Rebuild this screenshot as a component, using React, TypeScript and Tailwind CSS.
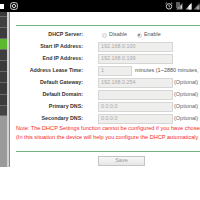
import React from "react";

const font = { fontFamily: '"Liberation Sans", Arial, sans-serif' };

function Row({ label, children }: { label: string; children?: React.ReactNode }) {
  return (
    <div className="flex h-[12px] items-center">
      <div className="w-[67px] shrink-0 text-right text-[5.3px] font-bold leading-none text-[#333]">{label}</div>
      <div className="ml-[15px] flex items-center">{children}</div>
    </div>
  );
}

function Box({ value, w = "w-[75px]" }: { value?: string; w?: string }) {
  return (
    <div className={`${w} flex h-[10px] items-center border border-[#d6d6d6] bg-[#eeeeec] pl-[2px] text-[5.4px] leading-none text-[#a8a8a8]`}>
      {value}
    </div>
  );
}

function Opt() {
  return <span className="ml-[1px] text-[5.5px] leading-none text-[#666]">(Optional)</span>;
}

export default function App() {
  const items = [
    "h-[4px] bg-[#3a3a3a]",
    "h-[10px] bg-[#404040]",
    "h-[10px] bg-[#3c3c3c]",
    "h-[10px] bg-[#5cb82c]",
    "h-[10px] bg-[#3e3e3e]",
    "h-[10px] bg-[#3a3a3a]",
    "h-[10px] bg-[#3c3c3c]",
    "h-[11px] bg-[#3a3a3a]",
    "h-[10px] bg-[#3c3c3c]",
    "h-[9px] bg-[#444]",
  ];
  return (
    <div className="relative h-[200px] w-[200px] overflow-hidden bg-white" style={font}>
      {/* status bar */}
      <div className="flex h-[12px] items-center bg-black">
        <div className="ml-0 h-[5px] w-[4px] bg-white" />
        <svg className="ml-[6px]" width="8" height="8" viewBox="0 0 8 8">
          <rect x="0.7" y="0.7" width="6.6" height="6.6" rx="1.8" fill="none" stroke="#ddd" strokeWidth="1" />
          <circle cx="4" cy="4" r="1.6" fill="none" stroke="#ddd" strokeWidth="1" />
        </svg>
        <div className="flex-1" />
        <svg width="8" height="8" viewBox="0 0 8 8" className="mr-[2px]">
          <circle cx="4" cy="4.4" r="2.7" fill="none" stroke="#ddd" strokeWidth="0.9" />
          <path d="M4 2.8 V4.5 L5 5.2" stroke="#ddd" strokeWidth="0.8" fill="none" />
          <path d="M0.6 1.8 L1.9 0.7 M7.4 1.8 L6.1 0.7" stroke="#ddd" strokeWidth="0.9" />
        </svg>
        <svg width="8" height="8" viewBox="0 0 8 8" className="mr-[2px]">
          <path d="M1 1 H5 M1 3 H5 M1 5 H4" stroke="#ccc" strokeWidth="0.9" />
          <path d="M7.5 1 V7.5 H1 Z" fill="#bbb" opacity="0.7" />
          <path d="M6.3 3.5 V6.5" stroke="#fff" strokeWidth="0.8" />
        </svg>
        <svg width="7" height="8" viewBox="0 0 7 8" className="mr-[1px]">
          <path d="M6.5 1 V7.5 H0.5 Z" fill="#aaa" />
          <path d="M6.5 1 V7.5 H3.5 V4 Z" fill="#eee" />
        </svg>
        <svg width="7" height="8" viewBox="0 0 7 8">
          <path d="M6.5 1 V7.5 H0.5 Z" fill="#666" />
          <path d="M6.5 3 V7.5 H3.5 V5 Z" fill="#999" />
        </svg>
      </div>

      <div className="flex h-[155px]">
        {/* sidebar */}
        <div className="flex w-[7px] flex-col bg-[#6a6a6a]">
          {items.map((c, i) => (
            <div key={i} className={`${c} mb-[1px] w-full`} />
          ))}
          <div className="flex-1 bg-[#9a9a9a]" />
        </div>
        <div className="w-[2px] bg-[#d2d2d2]" />
        <div className="w-[1px] bg-[#8a8a8a]" />

        {/* content */}
        <div className="flex-1 overflow-hidden whitespace-nowrap pl-[6px]">
          <div className="mt-[13px] h-[1px] w-[200px] bg-[#72b282]" />
          <div className="mt-[3px]">
            <Row label="DHCP Server:">
              <div className="ml-[4px] h-[5px] w-[5px] rounded-full border border-[#cfcfcf] bg-[#f4f4f4]" />
              <span className="ml-[2px] text-[5.4px] leading-none text-[#555]">Disable</span>
              <div className="ml-[10px] flex h-[5px] w-[5px] items-center justify-center rounded-full border border-[#cfcfcf] bg-[#f4f4f4]">
                <div className="h-[2px] w-[2px] rounded-full bg-[#777]" />
              </div>
              <span className="ml-[2px] text-[5.4px] leading-none text-[#555]">Enable</span>
            </Row>
            <Row label="Start IP Address:">
              <Box value="192.168.0.100" />
            </Row>
            <Row label="End IP Address:">
              <Box value="192.168.0.199" />
            </Row>
            <Row label="Address Lease Time:">
              <Box value="1" w="w-[34px]" />
              <span className="ml-[3px] text-[5.5px] leading-none text-[#555]">minutes (1~2880 minutes, The default value is 120)</span>
            </Row>
            <Row label="Default Gateway:">
              <Box value="192.168.0.254" />
              <Opt />
            </Row>
            <Row label="Default Domain:">
              <Box />
              <Opt />
            </Row>
            <Row label="Primary DNS:">
              <Box value="0.0.0.0" />
              <Opt />
            </Row>
            <Row label="Secondary DNS:">
              <Box value="0.0.0.0" />
              <Opt />
            </Row>
          </div>
          <div className="mt-[-1px] text-[5.6px] leading-[9px] text-[#f52a2a]">
            <div>Note: The DHCP Settings function cannot be configured if you have chosen Dynamic IP as WAN connection type.</div>
            <div>(In this situation the device will help you configure the DHCP automaticaly according to the network.)</div>
          </div>
          <div className="mt-[9px] h-[1px] w-[200px] bg-[#72b282]" />
          <div className="ml-[82px] mt-[4px] flex h-[10px] w-[47px] items-center justify-center border border-[#c4c4c4] bg-gradient-to-b from-[#f8f8f8] to-[#e6e6e6] text-[5.6px] leading-none text-[#9a9a9a]">
            Save
          </div>
        </div>
      </div>
    </div>
  );
}
